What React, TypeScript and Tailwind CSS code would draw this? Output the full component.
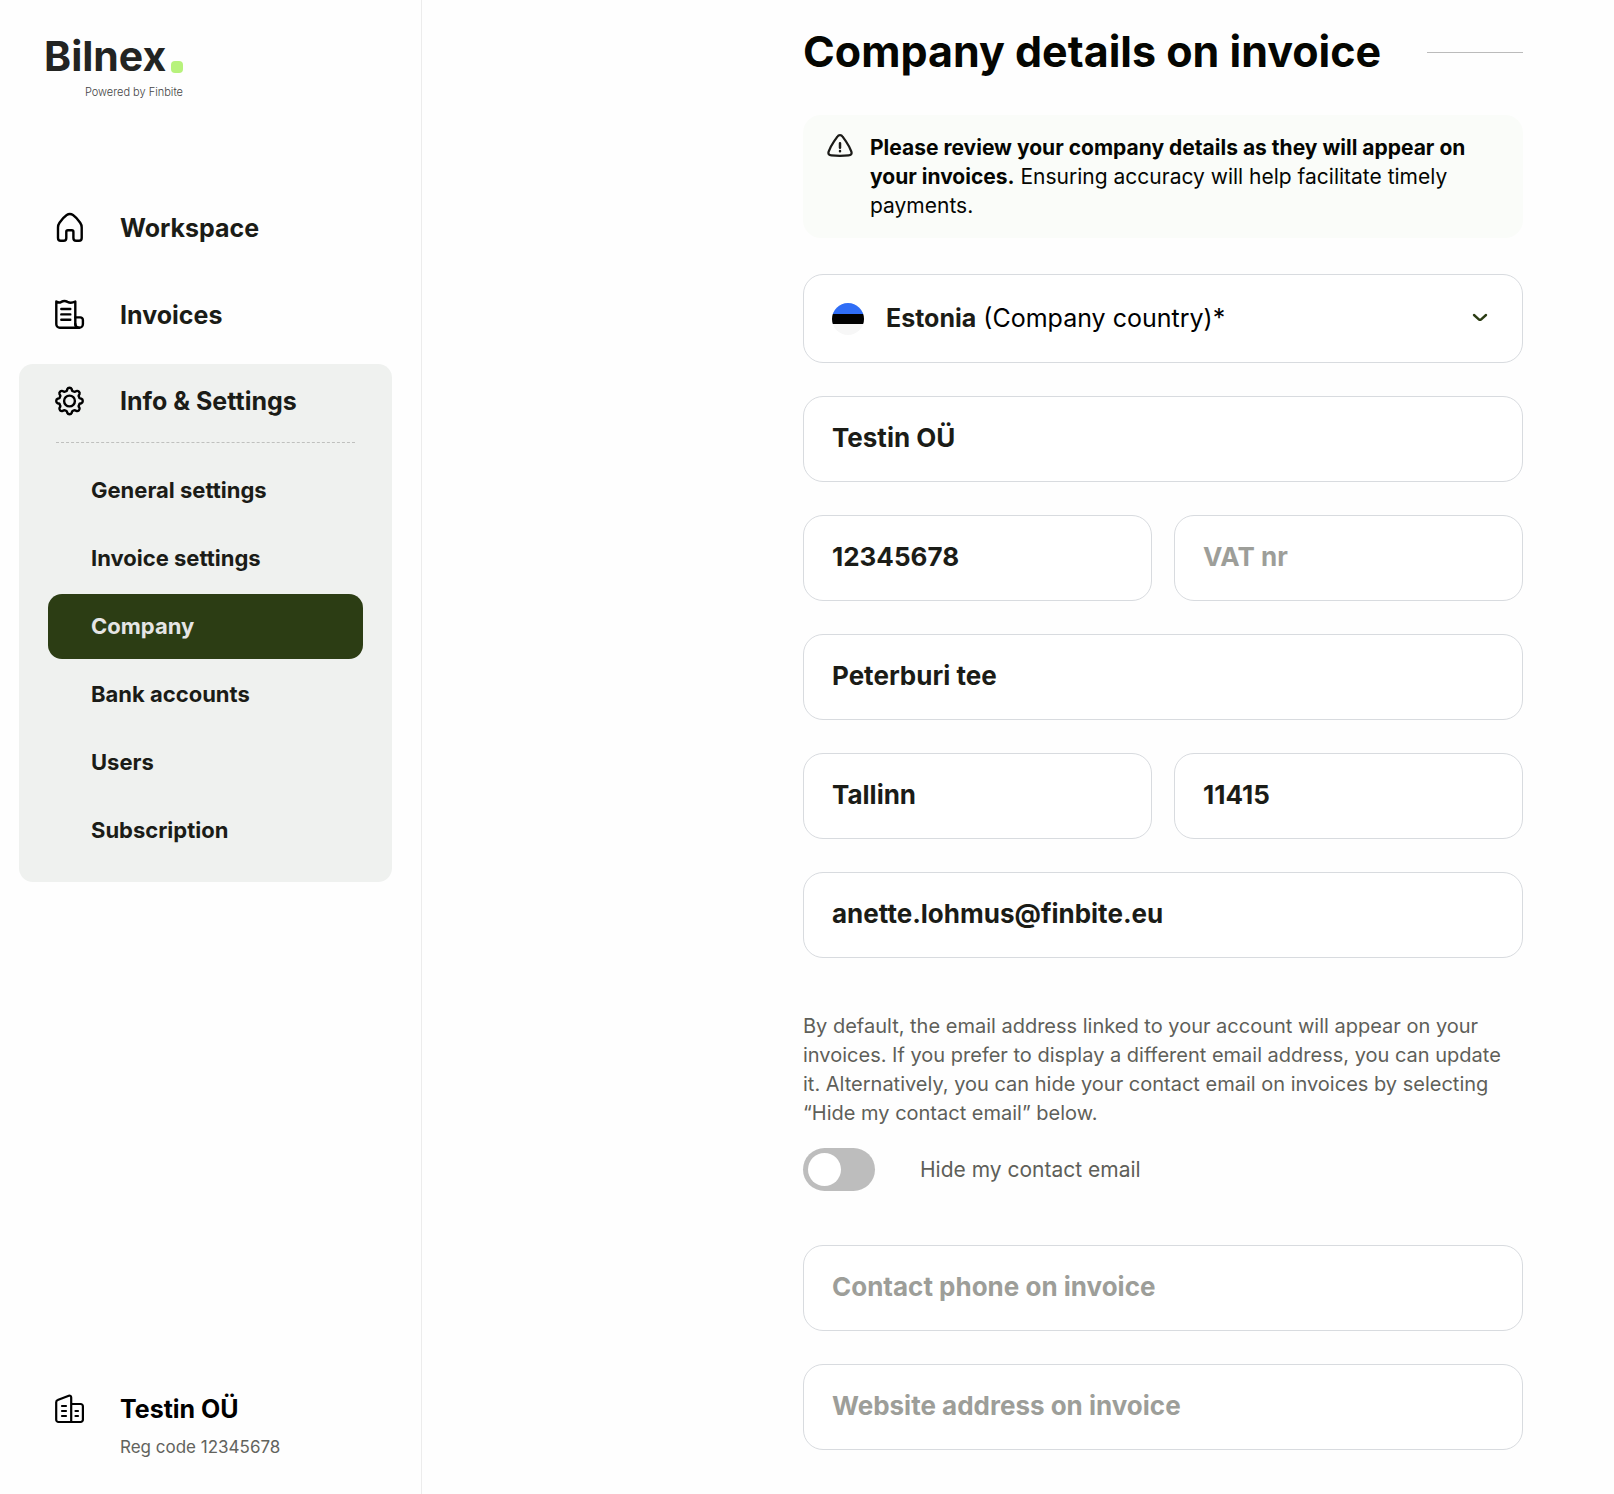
import { useState } from "react";
import type { ReactNode } from "react";

function HomeIcon() {
  return (
    <svg width="32" height="32" viewBox="0 0 32 32" fill="none" stroke="#000" strokeWidth="2.400" strokeLinecap="round" strokeLinejoin="round">
      <path d="M4 15.500c0-1.700.5-3.300 1.500-4.700C7 8.600 10 5 12.700 3.100c2-1.400 4.300-1.400 6.300 0 2.700 1.900 5.700 5.500 7.200 7.700 1 1.400 1.500 3 1.500 4.700V26a2.700 2.700 0 0 1-2.700 2.700h-2.900a2.700 2.700 0 0 1-2.700-2.700v-6.200a1.600 1.600 0 0 0-1.600-1.600h-3.900a1.600 1.600 0 0 0-1.600 1.600V26a2.700 2.700 0 0 1-2.700 2.700H6.700A2.700 2.700 0 0 1 4 26z" />
    </svg>
  );
}

function InvoiceIcon() {
  return (
    <svg width="32" height="32" viewBox="0 0 32 32" fill="none" stroke="#000" strokeWidth="2.400" strokeLinecap="round" strokeLinejoin="round">
      <path d="M2.300 2.500c1.700 1.300 3.600 1.300 5 .4 2-1.200 4.200-1.200 6.200 0 2.200 1.200 5 1 7.800-.4v22.600a3.700 3.700 0 0 0 3.700 3.700H5.900a3.600 3.600 0 0 1-3.600-3.600z" />
      <path d="M21.300 18.400h5a2.600 2.600 0 0 1 2.600 2.600v4a3.800 3.800 0 0 1-7.600 0" />
      <path d="M7.300 10h9M7.300 15.400h9M7.300 20.800h9" />
    </svg>
  );
}

// eight rounded teeth around a circle
const gearPath =
  Array.from({ length: 8 }, (_, i) => {
    const at = (deg: number, r: number) => {
      const a = ((i * 45 + deg - 90) * Math.PI) / 180;
      return `${(Math.cos(a) * r).toFixed(2)} ${(Math.sin(a) * r).toFixed(2)}`;
    };
    return `${i ? "L" : "M"}${at(-11, 12)} A2.500 2.500 0 0 1 ${at(11, 12)} Q${at(14, 10)} ${at(22.5, 10.4)} Q${at(31, 10)} ${at(34, 12)}`;
  }).join(" ") + "Z";

function GearIcon() {
  return (
    <svg width="32" height="32" viewBox="-15.500 -16 32 32" fill="none" stroke="#000" strokeWidth="2.400" strokeLinecap="round" strokeLinejoin="round">
      <circle r="5.400" />
      <path d={gearPath} />
    </svg>
  );
}

function BuildingIcon() {
  return (
    <svg width="32" height="32" viewBox="0 0 32 32" fill="none" stroke="#000" strokeWidth="2.200" strokeLinecap="round" strokeLinejoin="round">
      <path d="M17.200 29H4.500A2.300 2.300 0 0 1 2.200 26.700V9.200c0-1 .6-1.900 1.500-2.200L14.800 2.700a1.800 1.800 0 0 1 2.400 1.700zM17.200 11h9.400a2.300 2.300 0 0 1 2.300 2.300v13.400a2.300 2.300 0 0 1-2.300 2.300h-9.400" />
      <path d="M8 13h4M8 18h4M8 23h4M21.500 18h2.500M21.500 23h2.500" />
    </svg>
  );
}

function WarningIcon() {
  return (
    <svg className="shrink-0" width="28" height="24" viewBox="0 -1 28 24" fill="none" stroke="#1b1b18" strokeWidth="2.200" strokeLinecap="round" strokeLinejoin="round">
      <path d="M11.400 2.700a3 3 0 0 1 5.200 0l3.200 4.500c2.200 3.200 4.200 7 5.500 10.300.9 2.300-.3 3.700-2.700 3.900-5.700.5-11.500.5-17.200 0-2.400-.2-3.600-1.600-2.700-3.900C4 14.200 6 10.400 8.200 7.200z" />
      <path d="M14 9.200v4.500M14 17.100v.1" strokeWidth="2.500" />
    </svg>
  );
}

function Logo() {
  return (
    <a href="#" className="flex w-[139px] flex-col text-[#232422]">
      <span className="flex items-end justify-between">
        <span className="text-[41px] leading-[40px] font-bold">Bilnex</span>
        <span className="mb-[3px] size-3 rounded bg-[#b7f27c]" />
      </span>
      <span className="mt-2 self-end text-[11px] leading-4 font-light text-[#444]">Powered by Finbite</span>
    </a>
  );
}

function NavLink({ icon, children }: { icon: ReactNode; children: ReactNode }) {
  return (
    <a href="#" className="flex items-center gap-[34px] text-[25px] leading-8 font-bold">
      {icon}
      {children}
    </a>
  );
}

const settingsLinks = ["General settings", "Invoice settings", "Company", "Bank accounts", "Users", "Subscription"];

function Sidebar() {
  return (
    <aside className="flex w-[422px] shrink-0 flex-col border-r border-[#ececec] text-[#1b1c17]">
      <div className="pt-9 pl-11">
        <Logo />
      </div>
      <nav className="mt-[112px] pr-[29px] pl-[19px]">
        <div className="flex flex-col gap-[55px] pl-[35px]">
          <NavLink icon={<HomeIcon />}>Workspace</NavLink>
          <NavLink icon={<InvoiceIcon />}>Invoices</NavLink>
        </div>
        <div className="mt-[33px] rounded-[14px] bg-[#eff1ef] px-[29px] pt-[21px] pb-[19px]">
          <div className="pl-[6px]">
            <NavLink icon={<GearIcon />}>Info &amp; Settings</NavLink>
          </div>
          <div className="mx-2 mt-[25px] border-t border-dashed border-[#bfc0be]" />
          <ul className="mt-[15px] flex flex-col gap-[3px]">
            {settingsLinks.map((label) => (
              <li key={label}>
                <a
                  href="#"
                  aria-current={label === "Company" ? "page" : undefined}
                  className={
                    label === "Company"
                      ? "flex h-[65px] items-center rounded-[14px] bg-[#2c3d14] pl-[43px] text-[22px] font-bold text-[#e5e5e5]"
                      : "flex h-[65px] items-center rounded-[14px] pl-[43px] text-[22px] font-bold"
                  }
                >
                  {label}
                </a>
              </li>
            ))}
          </ul>
        </div>
      </nav>
      <div className="mt-auto flex gap-[34px] pb-[33px] pl-[54px] text-black">
        <BuildingIcon />
        <div>
          <p className="text-[25px] leading-8 font-bold">Testin OÜ</p>
          <p className="mt-2 text-[17px] leading-7 text-[#62635d]">Reg code 12345678</p>
        </div>
      </div>
    </aside>
  );
}

function Field({ label, value = "" }: { label: string; value?: string }) {
  return (
    <input
      type="text"
      aria-label={label}
      placeholder={label}
      defaultValue={value}
      className="h-[86px] w-full min-w-0 rounded-[20px] border border-[#d8dbdf] bg-white px-7 pb-[3px] text-[26px] font-bold text-[#1b1c17] placeholder:text-[#9d9e99]"
    />
  );
}

function CountrySelect() {
  return (
    <div className="relative flex h-[89px] items-center rounded-[20px] border border-[#d8dbdf] bg-white px-7">
      <span className="flex size-8 flex-col overflow-hidden rounded-full bg-[#f7f7f7]">
        <span className="h-[11px] bg-[#2f6df6]" />
        <span className="h-[10px] bg-black" />
      </span>
      <span aria-hidden="true" className="ml-[22px] text-[25px] text-black">
        <span className="font-bold text-[#1b1c17]">Estonia</span> (Company country)*
      </span>
      <svg className="mr-1 ml-auto" width="20" height="20" viewBox="0 1 20 20" fill="none" stroke="#2c3d14" strokeWidth="2.400" strokeLinecap="round" strokeLinejoin="round">
        <path d="M4 7l4.800 4.300a1.800 1.800 0 0 0 2.400 0L16 7" />
      </svg>
      <select aria-label="Company country" defaultValue="Estonia" className="absolute inset-0 w-full cursor-pointer opacity-0">
        <option>Estonia</option>
      </select>
    </div>
  );
}

export default function App() {
  const [hidden, setHidden] = useState(false);

  return (
    <div className="flex min-h-screen bg-[#fefefe] font-['Inter','Liberation_Sans',sans-serif]">
      <Sidebar />
      <main className="min-w-0 flex-1 pr-[91px] pb-11 pl-6">
        <form className="ml-auto max-w-[720px]">
          <div className="flex items-center gap-[46px] pt-7">
            <h1 className="pb-[2px] text-[43px] leading-[46px] font-bold whitespace-nowrap text-[#050602]">Company details on invoice</h1>
            <div className="flex-1 border-t border-[#bbb]" />
          </div>

          <div className="mt-[39px] flex gap-4 rounded-[18px] bg-[#fafcf9] py-[18px] pr-8 pl-[23px]">
            <WarningIcon />
            <p className="text-[21px] leading-[29px] text-[#050602]">
              <strong className="font-bold">Please review your company details as they will appear on your invoices.</strong>{" "}
              Ensuring accuracy will help facilitate timely payments.
            </p>
          </div>

          <div className="mt-9 flex flex-col gap-[33px]">
            <CountrySelect />
            <Field label="Company name" value="Testin OÜ" />
            <div className="grid grid-cols-2 gap-[22px]">
              <Field label="Registration code" value="12345678" />
              <Field label="VAT nr" />
            </div>
            <Field label="Street address" value="Peterburi tee" />
            <div className="grid grid-cols-2 gap-[22px]">
              <Field label="City" value="Tallinn" />
              <Field label="Postal code" value="11415" />
            </div>
            <Field label="Contact email" value="anette.lohmus@finbite.eu" />
          </div>

          <p className="mt-[54px] text-[20px] leading-[29px] text-[#5e5f59]">
            By default, the email address linked to your account will appear on your invoices. If you prefer to display a
            different email address, you can update it. Alternatively, you can hide your contact email on invoices by
            selecting “Hide my contact email” below.
          </p>

          <label className="mt-5 flex w-fit cursor-pointer items-center gap-[45px] text-[21px] text-[#5e5f59]">
            <input
              type="checkbox"
              role="switch"
              checked={hidden}
              onChange={(e) => setHidden(e.target.checked)}
              className="flex h-[43px] w-[72px] cursor-pointer appearance-none items-center rounded-full bg-[#bdbdbd] px-[5px] before:size-[33px] before:rounded-full before:bg-white checked:justify-end checked:bg-[#2c3d14]"
            />
            Hide my contact email
          </label>

          <div className="mt-[54px] flex flex-col gap-[33px]">
            <Field label="Contact phone on invoice" />
            <Field label="Website address on invoice" />
          </div>
        </form>
      </main>
    </div>
  );
}
